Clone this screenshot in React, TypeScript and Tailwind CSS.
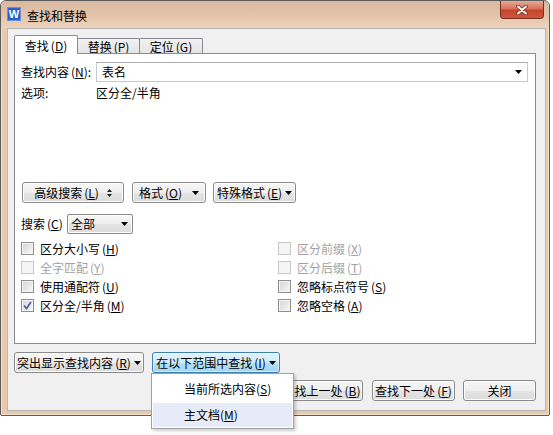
import React from 'react';

const font = "font-['Noto_Sans_CJK_SC','Microsoft_YaHei',sans-serif]";

const btn =
  'flex items-center justify-center h-[21px] border border-[#8a8a8a] rounded-[3px] bg-[linear-gradient(#f6f6f6,#efefef_50%,#e4e4e4_50%,#dcdcdc)] shadow-[inset_0_0_0_1px_#fdfdfd] text-[12px] leading-none text-black';

function Key({ k }: { k: string }) {
  return (
    <span className="ml-[2px]">
      (<span className="underline underline-offset-1">{k}</span>)
    </span>
  );
}

function Arrow() {
  return (
    <svg width="7" height="4" viewBox="0 0 7 4" className="shrink-0">
      <path d="M0 0h7L3.5 4z" fill="#000" />
    </svg>
  );
}

function UpDown() {
  return (
    <svg width="5" height="8" viewBox="0 0 5 8" className="shrink-0">
      <path d="M0 3h5L2.5 0z" fill="#222" />
      <path d="M0 5h5L2.5 8z" fill="#222" />
    </svg>
  );
}

function Checkbox({ checked, disabled }: { checked?: boolean; disabled?: boolean }) {
  return (
    <div
      className={
        disabled
          ? 'w-[13px] h-[13px] border border-[#c8c8c8] bg-[#f5f5f5] shrink-0'
          : 'w-[13px] h-[13px] border border-[#8e8f8f] bg-[linear-gradient(135deg,#d4d4d4,#f8f8f8)] shadow-[inset_0_0_0_1px_#f4f4f4] shrink-0 flex items-center justify-center'
      }
    >
      {checked && (
        <svg width="11" height="11" viewBox="0 0 11 11">
          <path d="M2 5.5L4.5 8.5L9 2" fill="none" stroke="#4b61a0" strokeWidth="1.7" />
        </svg>
      )}
    </div>
  );
}

function Option({ label, k, checked, disabled }: { label: string; k: string; checked?: boolean; disabled?: boolean }) {
  return (
    <div className="h-[19px] flex items-center gap-[6px]">
      <Checkbox checked={checked} disabled={disabled} />
      <span className={disabled ? 'text-[#a2a2a2]' : 'text-black'}>
        {label}
        <Key k={k} />
      </span>
    </div>
  );
}

export default function App() {
  return (
    <div className={`relative w-[553px] h-[435px] bg-white overflow-hidden text-[12px] leading-none text-black ${font}`}>
      <div className="w-[550px] h-[416px] flex flex-col border border-[#5c5c5c] rounded-t-[6px] rounded-b-[2px] bg-[#ebc9ad] shadow-[inset_0_0_0_1px_rgba(255,255,255,0.45)]">
        {/* title bar */}
        <div className="h-[27px] flex items-start rounded-t-[5px] bg-[linear-gradient(180deg,#d9b89f,#e3c4ab_55%,#eed3bc)]">
          <div className="ml-[6px] mt-[6px] w-[14px] h-[14px] bg-[#2d5fc9] border border-[#6d8fd8] flex items-center justify-center text-white font-bold text-[11px] leading-none font-['Liberation_Sans',sans-serif]">
            W
          </div>
          <span className="ml-[6px] mt-[8px] text-[12px] leading-[14px] text-black">查找和替换</span>
          <div className="ml-auto mr-[5px] w-[44px] h-[18px] rounded-b-[4px] border border-t-0 border-[#7a2e22] bg-[linear-gradient(180deg,#e9a995,#d8725c_45%,#c6432b_55%,#d0573f)] flex items-center justify-center">
            <svg width="12" height="10" viewBox="0 0 12 10">
              <path d="M2 1.5L10 8.5M10 1.5L2 8.5" stroke="#6b2a20" strokeWidth="3.6" strokeLinecap="round" />
              <path d="M2 1.5L10 8.5M10 1.5L2 8.5" stroke="#ffffff" strokeWidth="2" strokeLinecap="round" />
            </svg>
          </div>
        </div>

        {/* client area */}
        <div className="ml-[6px] w-[539px] h-[383px] border border-[#b7b7b7] bg-[#f0f0f0] pt-[6px] pl-[6px] flex flex-col">
          {/* tabs */}
          <div className="h-[18px] flex items-end">
            <div className="relative z-10 -mb-px w-[64px] h-[19px] bg-white border border-b-0 border-[#898c95] rounded-t-[2px] flex items-center justify-center pt-[1px]">
              查找<Key k="D" />
            </div>
            <div className="-ml-px w-[63px] h-[15px] border border-b-0 border-[#898c95] rounded-t-[2px] bg-[linear-gradient(#f2f2f2,#e4e4e4)] flex items-center justify-center pt-[1px]">
              替换<Key k="P" />
            </div>
            <div className="-ml-px w-[64px] h-[15px] border border-b-0 border-[#898c95] rounded-t-[2px] bg-[linear-gradient(#f2f2f2,#e4e4e4)] flex items-center justify-center pt-[1px]">
              定位<Key k="G" />
            </div>
          </div>

          {/* panel */}
          <div className="w-[522px] h-[291px] border border-[#898c95] bg-white pt-[8px] pl-[6px] flex flex-col">
            <div className="h-[20px] flex items-center">
              <span className="w-[75px]">
                查找内容<Key k="N" />:
              </span>
              <div className="w-[432px] h-[20px] border border-[#c5cad2] border-t-[#abadb3] bg-white flex items-center pl-[5px] pr-[5px]">
                <span className="flex-1">表名</span>
                <Arrow />
              </div>
            </div>
            <div className="mt-[1px] h-[20px] flex items-center">
              <span className="w-[75px]">选项:</span>
              <span>区分全/半角</span>
            </div>

            <div className="mt-[79px] flex items-center">
              <div className={`${btn} ml-[1px] w-[102px] gap-[8px]`}>
                <span>
                  高级搜索<Key k="L" />
                </span>
                <UpDown />
              </div>
              <div className={`${btn} ml-[8px] w-[74px] gap-[10px]`}>
                <span>
                  格式<Key k="O" />
                </span>
                <Arrow />
              </div>
              <div className={`${btn} ml-[7px] w-[83px] gap-[3px]`}>
                <span>
                  特殊格式<Key k="E" />
                </span>
                <Arrow />
              </div>
            </div>

            <div className="mt-[11px] h-[20px] flex items-center">
              <span className="w-[46px]">
                搜索<Key k="C" />
              </span>
              <div className="w-[66px] h-[20px] border border-[#8a8a8a] rounded-[2px] bg-[linear-gradient(#f6f6f6,#efefef_50%,#e4e4e4_50%,#dcdcdc)] shadow-[inset_0_0_0_1px_#fdfdfd] flex items-center pl-[3px] pr-[4px]">
                <span className="flex-1">全部</span>
                <Arrow />
              </div>
            </div>

            <div className="mt-[5px] grid grid-cols-[257px_1fr]">
              <Option label="区分大小写" k="H" />
              <Option label="区分前缀" k="X" disabled />
              <Option label="全字匹配" k="Y" disabled />
              <Option label="区分后缀" k="T" disabled />
              <Option label="使用通配符" k="U" />
              <Option label="忽略标点符号" k="S" />
              <Option label="区分全/半角" k="M" checked />
              <Option label="忽略空格" k="A" />
            </div>
          </div>

          {/* bottom buttons */}
          <div className="mt-[8px] flex items-center">
            <div className={`${btn} w-[130px] gap-[3px]`}>
              <span>
                突出显示查找内容<Key k="R" />
              </span>
              <Arrow />
            </div>
            <div className="ml-[8px] w-[128px] h-[21px] flex items-center justify-center gap-[3px] border border-[#3c7fb1] rounded-[3px] bg-[linear-gradient(#e3f3fc,#cdebfb_50%,#b3e0f9_50%,#a1d6f4)] shadow-[inset_0_0_0_1px_rgba(255,255,255,0.5)]">
              <span>
                在以下范围中查找<Key k="I" />
              </span>
              <Arrow />
            </div>
          </div>
          <div className="mt-[7px] w-[522px] flex justify-end">
            <div className={`${btn} w-[83px]`}>
              查找上一处<Key k="B" />
            </div>
            <div className={`${btn} ml-[9px] w-[83px]`}>
              查找下一处<Key k="F" />
            </div>
            <div className={`${btn} ml-[8px] w-[73px]`}>关闭</div>
          </div>
        </div>
      </div>

      {/* open dropdown menu */}
      <div className="absolute z-20 left-[151px] top-[373px] w-[143px] h-[56px] border border-[#a0a0a0] bg-white shadow-[2px_2px_3px_rgba(0,0,0,0.2)] flex flex-col">
        <div className="h-[29px] flex items-center pl-[32px]">
          当前所选内容(<span className="underline underline-offset-1">S</span>)
        </div>
        <div className="mx-[1px] h-[24px] bg-[#e6ebfa] flex items-center pl-[31px]">
          主文档(<span className="underline underline-offset-1">M</span>)
        </div>
      </div>
    </div>
  );
}
